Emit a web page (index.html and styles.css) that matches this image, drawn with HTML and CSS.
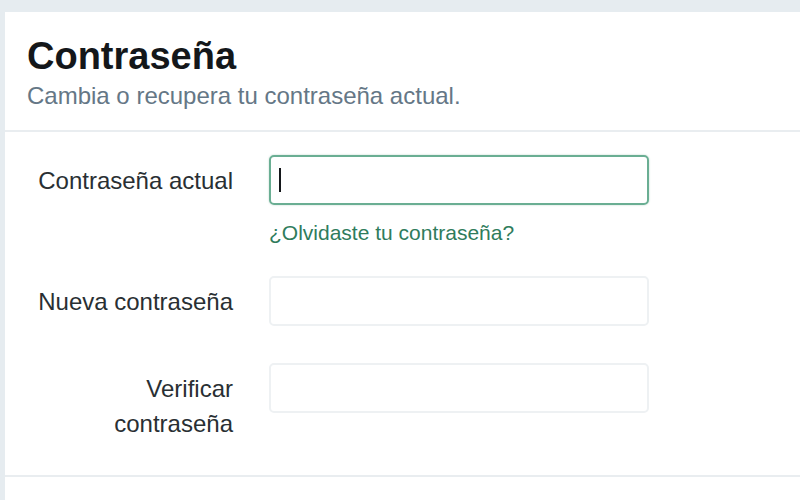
FILE: index.html
```html
<!DOCTYPE html>
<html lang="es">
<head>
<meta charset="utf-8">
<title>Contraseña</title>
<link rel="stylesheet" href="styles.css">
</head>
<body>
<div class="card">
  <header class="head">
    <h1 class="title">Contraseña</h1>
    <p class="subtitle">Cambia o recupera tu contraseña actual.</p>
  </header>
  <form class="form">
    <div class="row first">
      <label class="label" for="cur">Contraseña actual</label>
      <div class="field">
        <div class="input focus"><span class="caret"></span></div>
        <a class="link" href="#">¿Olvidaste tu contraseña?</a>
      </div>
    </div>
    <div class="row">
      <label class="label" for="new">Nueva contraseña</label>
      <div class="field"><div class="input"></div></div>
    </div>
    <div class="row">
      <label class="label" for="ver">Verificar<br>contraseña</label>
      <div class="field"><div class="input"></div></div>
    </div>
  </form>
  <div class="foot"></div>
</div>
</body>
</html>
```
FILE: styles.css
```css
html, body {
  margin: 0;
  padding: 0;
  height: 100%;
  overflow: hidden;
}
body {
  background: #e6ecf0;
  font-family: "Liberation Sans", Arial, sans-serif;
  color: #14171a;
  padding: 12px 0 0 5px;
  box-sizing: border-box;
}
.card {
  background: #fff;
  height: 100%;
}
.head {
  padding: 24px 22px 0 22px;
  height: 120px;
  box-sizing: border-box;
  border-bottom: 2px solid #e9edf0;
}
.title {
  margin: 0;
  font-size: 38px;
  font-weight: bold;
  line-height: 40px;
  color: #14171a;
}
.subtitle {
  margin: 5px 0 0 0;
  font-size: 24px;
  line-height: 30px;
  color: #657786;
}
.form {
  padding: 23px 0 0 0;
  border-bottom: 2px solid #e9edf0;
  height: 345px;
  box-sizing: border-box;
}
.row {
  display: flex;
  align-items: flex-start;
  gap: 36px;
  margin-bottom: 37px;
}
.row.first {
  margin-bottom: 29px;
}
.label {
  width: 228px;
  text-align: right;
  font-size: 24px;
  line-height: 35px;
  padding-top: 8px;
  color: #292f33;
}
.field {
  display: flex;
  flex-direction: column;
}
.input {
  width: 380px;
  height: 50px;
  box-sizing: border-box;
  border: 2px solid #eef1f3;
  border-radius: 5px;
  display: flex;
  align-items: center;
  padding-left: 8px;
}
.input.focus {
  border-color: #6aae93;
  box-shadow: 0 0 2px rgba(80, 150, 120, 0.4);
}
.caret {
  width: 2px;
  height: 24px;
  background: #14171a;
}
.link {
  margin-top: 14px;
  font-size: 21px;
  line-height: 28px;
  color: #2f7c5c;
  text-decoration: none;
}
```
